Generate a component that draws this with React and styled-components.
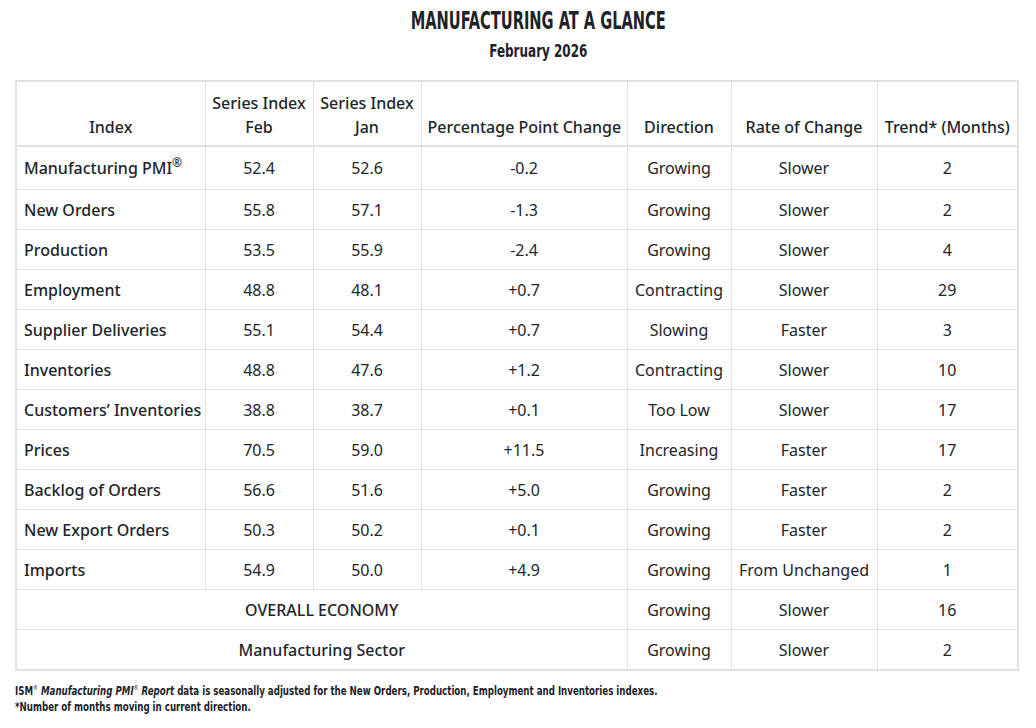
import React from 'react';
import styled, { createGlobalStyle } from 'styled-components';

const GlobalStyle = createGlobalStyle`
  body {
    margin: 0;
    background: #fff;
    color: #212529;
    font-family: "Noto Sans", "Open Sans", sans-serif;
  }
`;

const Page = styled.div`
  padding: 0 15px;
`;

const Heading = styled.div`
  text-align: center;
  padding: 6px 0 0 40px;
  margin-bottom: 16px;
  font-family: "DejaVu Sans Condensed", "DejaVu Sans", sans-serif;
  font-weight: 700;
  color: #1d2228;
`;

const Narrow = styled.span`
  display: inline-block;
  transform: scaleX(${(p) => p.$scale});
  transform-origin: ${(p) => (p.$left ? 'left center' : 'center')};
  white-space: nowrap;
`;

const Title = styled.h1`
  margin: 0;
  font-size: 25px;
  line-height: 30px;
`;

const Subtitle = styled.h2`
  margin: 2px 0 0;
  font-size: 18px;
  line-height: 26px;
`;

const Table = styled.table`
  width: 1002px;
  border-collapse: collapse;
  table-layout: fixed;
  border: 2px solid #dee2e6;
  font-size: 16px;
  line-height: 24px;
`;

const HeadCell = styled.th`
  border: 1px solid #dee2e6;
  border-bottom: 2px solid #dee2e6;
  padding: 9px 6px 6px;
  font-weight: 500;
  text-align: center;
  vertical-align: bottom;
  white-space: nowrap;
`;

const Cell = styled.td`
  border: 1px solid #dee2e6;
  padding: ${(p) => (p.$tall ? '9px 6px 9px' : '7.5px 6px')};
  text-align: ${(p) => (p.$label ? 'left' : 'center')};
  font-weight: ${(p) => (p.$label || p.$strong ? 500 : 400)};
  white-space: nowrap;
  ${(p) => p.$label && 'padding-left: 7px;'}
`;

const Sup = styled.sup`
  font-size: 12px;
  line-height: 0;
  vertical-align: 7px;
  font-weight: 600;
`;

const Notes = styled.div`
  margin-top: 12px;
  font-family: "DejaVu Sans Condensed", "DejaVu Sans", sans-serif;
  font-weight: 700;
  font-size: 12.5px;
  line-height: 16px;
  color: #1d2228;
`;

const Tiny = styled.sup`
  font-size: 7px;
  line-height: 0;
  vertical-align: 5px;
  font-weight: 400;
`;

const rows = [
  ['Manufacturing PMI', '52.4', '52.6', '-0.2', 'Growing', 'Slower', '2', true],
  ['New Orders', '55.8', '57.1', '-1.3', 'Growing', 'Slower', '2'],
  ['Production', '53.5', '55.9', '-2.4', 'Growing', 'Slower', '4'],
  ['Employment', '48.8', '48.1', '+0.7', 'Contracting', 'Slower', '29'],
  ['Supplier Deliveries', '55.1', '54.4', '+0.7', 'Slowing', 'Faster', '3'],
  ['Inventories', '48.8', '47.6', '+1.2', 'Contracting', 'Slower', '10'],
  ['Customers\u2019 Inventories', '38.8', '38.7', '+0.1', 'Too Low', 'Slower', '17'],
  ['Prices', '70.5', '59.0', '+11.5', 'Increasing', 'Faster', '17'],
  ['Backlog of Orders', '56.6', '51.6', '+5.0', 'Growing', 'Faster', '2'],
  ['New Export Orders', '50.3', '50.2', '+0.1', 'Growing', 'Faster', '2'],
  ['Imports', '54.9', '50.0', '+4.9', 'Growing', 'From Unchanged', '1'],
];

const summary = [
  ['OVERALL ECONOMY', 'Growing', 'Slower', '16'],
  ['Manufacturing Sector', 'Growing', 'Slower', '2'],
];

const widths = [189, 108, 108, 206, 104, 146, 141];

export default function App() {
  return (
    <Page>
      <GlobalStyle />
      <Heading>
        <Title>
          <Narrow $scale={0.65}>MANUFACTURING AT A GLANCE</Narrow>
        </Title>
        <Subtitle>
          <Narrow $scale={0.74}>February 2026</Narrow>
        </Subtitle>
      </Heading>
      <Table>
        <colgroup>
          {widths.map((w, i) => (
            <col key={i} style={{ width: w }} />
          ))}
        </colgroup>
        <thead>
          <tr>
            <HeadCell>Index</HeadCell>
            <HeadCell>
              Series Index
              <br />
              Feb
            </HeadCell>
            <HeadCell>
              Series Index
              <br />
              Jan
            </HeadCell>
            <HeadCell>Percentage Point Change</HeadCell>
            <HeadCell>Direction</HeadCell>
            <HeadCell>Rate of Change</HeadCell>
            <HeadCell>Trend* (Months)</HeadCell>
          </tr>
        </thead>
        <tbody>
          {rows.map(([name, feb, jan, change, dir, rate, trend, reg]) => (
            <tr key={name}>
              <Cell $label $tall={reg}>
                {name}
                {reg && <Sup>®</Sup>}
              </Cell>
              <Cell $tall={reg}>{feb}</Cell>
              <Cell $tall={reg}>{jan}</Cell>
              <Cell $tall={reg}>{change}</Cell>
              <Cell $tall={reg}>{dir}</Cell>
              <Cell $tall={reg}>{rate}</Cell>
              <Cell $tall={reg}>{trend}</Cell>
            </tr>
          ))}
          {summary.map(([name, dir, rate, trend]) => (
            <tr key={name}>
              <Cell colSpan={4} $strong>
                {name}
              </Cell>
              <Cell>{dir}</Cell>
              <Cell>{rate}</Cell>
              <Cell>{trend}</Cell>
            </tr>
          ))}
        </tbody>
      </Table>
      <Notes>
        <Narrow $scale={0.77} $left>
          ISM<Tiny>®</Tiny> <i>Manufacturing PMI<Tiny>®</Tiny> Report</i> data is seasonally
          adjusted for the New Orders, Production, Employment and Inventories indexes.
        </Narrow>
        <br />
        <Narrow $scale={0.77} $left>
          *Number of months moving in current direction.
        </Narrow>
      </Notes>
    </Page>
  );
}
